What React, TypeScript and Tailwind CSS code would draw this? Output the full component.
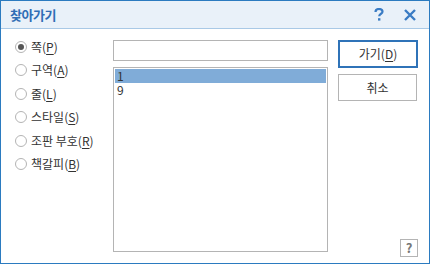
const font = { fontFamily: '"Noto Sans CJK KR", "Noto Sans", sans-serif' }

const options = [
  { label: '쪽', key: 'P', checked: true },
  { label: '구역', key: 'A' },
  { label: '줄', key: 'L' },
  { label: '스타일', key: 'S' },
  { label: '조판 부호', key: 'R' },
  { label: '책갈피', key: 'B' },
]

function Radio({ checked }: { checked?: boolean }) {
  return (
    <span className="w-[12px] h-[12px] rounded-full border border-[#b4b4b4] bg-white flex items-center justify-center">
      {checked && <span className="w-[6px] h-[6px] rounded-full bg-[#555555]" />}
    </span>
  )
}

export default function App() {
  return (
    <div
      className="w-[430px] h-[264px] border border-[#2b7bc0] bg-white flex flex-col text-[#333333]"
      style={font}
    >
      {/* Title bar */}
      <div className="h-[28px] shrink-0 bg-[#e9f1f9] border-b border-[#a9c9e6] flex items-center pl-[9px] pr-[13px]">
        <span className="text-[13px] font-bold text-[#2f6db5] tracking-[-0.5px]">찾아가기</span>
        <div className="ml-auto flex items-center gap-[20px]">
          <svg width="10" height="13" viewBox="0 0 10 13">
            <path d="M1.5 4 C1.5 1.5 3 1 5 1 C7 1 8.5 2 8.5 3.8 C8.5 5.8 5.2 5.8 5.2 8.3" fill="none" stroke="#3a7cc4" strokeWidth="2.2" />
            <rect x="4" y="10.2" width="2.4" height="2.4" fill="#3a7cc4" />
          </svg>
          <svg width="12" height="12" viewBox="0 0 12 12">
            <path d="M1 1 L11 11 M11 1 L1 11" stroke="#3a7cc4" strokeWidth="2.4" />
          </svg>
        </div>
      </div>

      {/* Body */}
      <div className="flex-1 flex pt-[6px] pl-[14px] relative">
        <div className="w-[98px] shrink-0 flex flex-col">
          {options.map((o) => (
            <div key={o.key} className="h-[23.5px] flex items-center gap-[4px] text-[12px] text-[#333333]">
              <Radio checked={o.checked} />
              <span>
                {o.label}(<span className="underline underline-offset-2">{o.key}</span>)
              </span>
            </div>
          ))}
        </div>

        <div className="w-[215px] flex flex-col gap-[6px] pt-[5px]">
          <div className="h-[21px] border border-[#b4b4b4] bg-white" />
          <div className="h-[185px] border border-[#b4b4b4] bg-white p-px text-[12px] leading-[14px] text-[#333333]">
            <div className="h-[14px] bg-[#80acd8] pl-[2px]">1</div>
            <div className="h-[14px] pl-[2px]">9</div>
          </div>
        </div>

        <div className="ml-[10px] flex flex-col gap-[6px] pt-[5px]">
          <button className="w-[80px] h-[28px] border-2 border-[#2f73b8] bg-white text-[12px] text-[#333333]">
            가기(<span className="underline underline-offset-2">D</span>)
          </button>
          <button className="w-[79px] h-[27px] border border-[#b4b4b4] bg-white text-[12px] text-[#333333]">
            취소
          </button>
        </div>

        <div className="absolute right-[11px] bottom-[6px] w-[18px] h-[18px] border border-[#b4b4b4] flex items-center justify-center text-[13px] font-bold text-[#777777]">
          ?
        </div>
      </div>
    </div>
  )
}
